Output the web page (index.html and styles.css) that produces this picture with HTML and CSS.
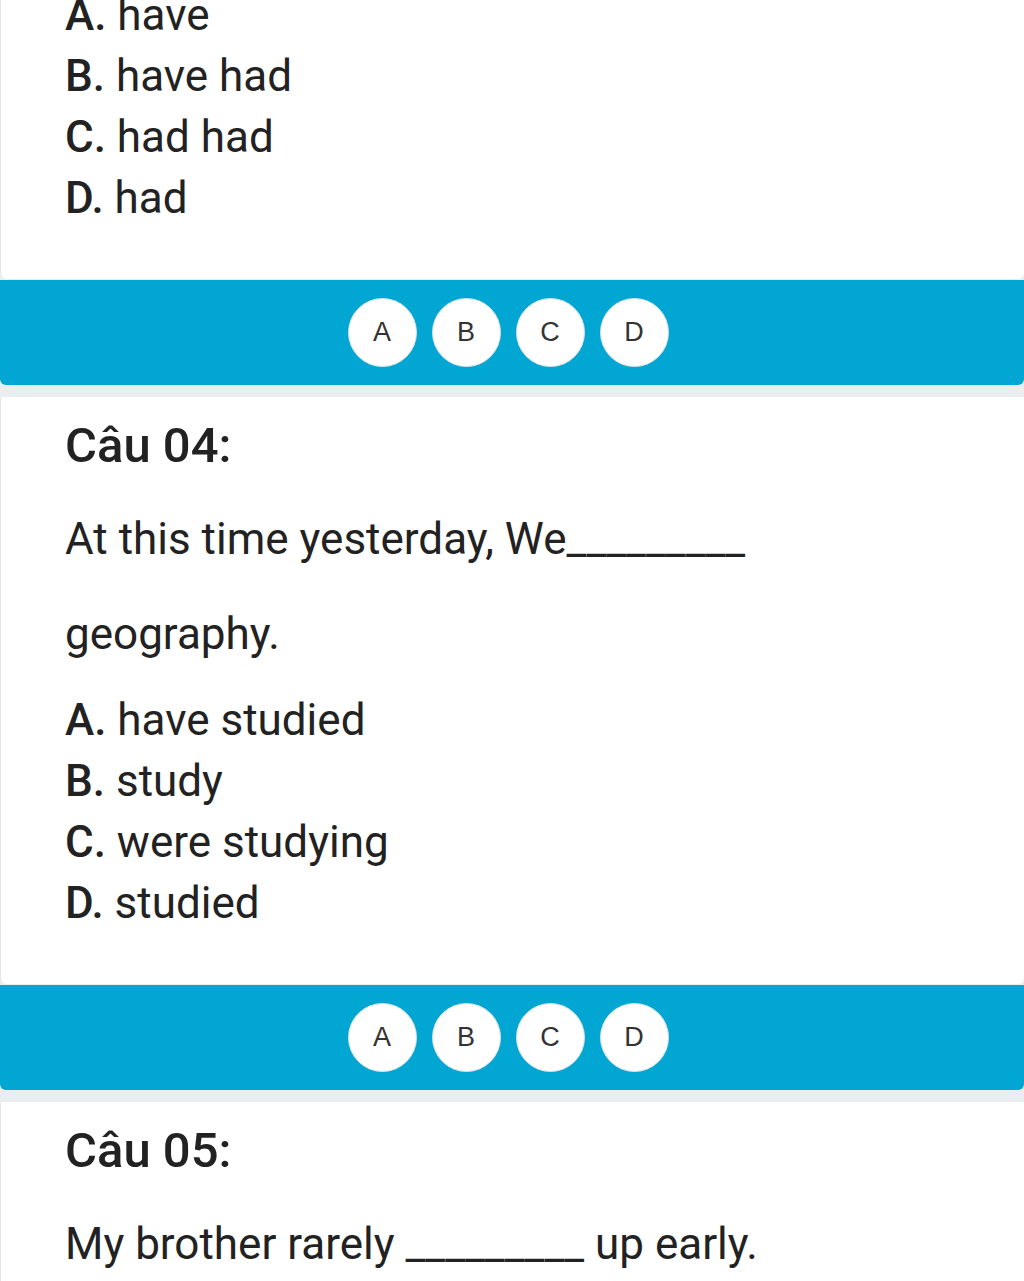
FILE: index.html
```html
<!DOCTYPE html>
<html lang="vi">
<head>
    <meta charset="UTF-8">
    <meta name="viewport" content="width=device-width, initial-scale=1.0">
    <title>Trắc nghiệm tiếng Anh</title>
    <link rel="stylesheet" href="styles.css">
</head>
<body>
    <div class="quiz">
        <!-- Câu 03 (phần cuối) -->
        <div class="question first">
            <ul class="options">
                <li><b>A.</b> have</li>
                <li><b>B.</b> have had</li>
                <li><b>C.</b> had had</li>
                <li><b>D.</b> had</li>
            </ul>
        </div>
        <div class="answer-bar">
            <button class="choice">A</button>
            <button class="choice">B</button>
            <button class="choice">C</button>
            <button class="choice">D</button>
        </div>

        <!-- Câu 04 -->
        <div class="question">
            <h2 class="q-title">Câu 04:</h2>
            <p class="q-text">At this time yesterday, We_________ geography.</p>
            <ul class="options">
                <li><b>A.</b> have studied</li>
                <li><b>B.</b> study</li>
                <li><b>C.</b> were studying</li>
                <li><b>D.</b> studied</li>
            </ul>
        </div>
        <div class="answer-bar">
            <button class="choice">A</button>
            <button class="choice">B</button>
            <button class="choice">C</button>
            <button class="choice">D</button>
        </div>

        <!-- Câu 05 -->
        <div class="question">
            <h2 class="q-title">Câu 05:</h2>
            <p class="q-text">My brother rarely _________ up early.</p>
        </div>
    </div>
</body>
</html>
```

FILE: styles.css
```css
body {
    font-family: Roboto, "Noto Sans", Arial, sans-serif;
    background-color: #e9eef1; /* Light gray */
    color: #222222;
    margin: 0;
    padding: 0;
    overflow: hidden;
}
.quiz {
    display: flex;
    flex-direction: column;
}
.question {
    background-color: #FFFFFF;
    border-left: 1px solid #e3e7ea;
    border-radius: 0 0 6px 6px;
    padding: 22px 0 50px 64px;
}
.question.first {
    padding-top: 0;
    padding-bottom: 50px;
}
.question.first .options {
    margin-top: -15px;
}
.q-title {
    margin: 0;
    font-size: 49px;
    line-height: 54px;
    font-weight: 500;
}
.q-text {
    margin: 19px 0 0 0;
    font-size: 44px;
    line-height: 95px;
    width: 700px;
}
.options {
    list-style: none;
    margin: 8px 0 0 0;
    padding: 0;
}
.options li {
    font-size: 44px;
    line-height: 61px;
}
.options b {
    font-weight: 500;
}
.answer-bar {
    background-color: #02a6d2; /* Blue */
    border-radius: 0 0 6px 6px;
    margin: 1px 0 12px 0;
    height: 105px;
    display: flex;
    justify-content: center;
    align-items: center;
    gap: 15px;
    padding-right: 8px;
}
.choice {
    width: 69px;
    height: 69px;
    border-radius: 50%;
    border: 1px solid #d9e3e8;
    background-color: #FFFFFF;
    color: #333333;
    font-family: "Liberation Sans", Arial, sans-serif;
    font-size: 27px;
    padding: 0;
    cursor: pointer;
}
```
